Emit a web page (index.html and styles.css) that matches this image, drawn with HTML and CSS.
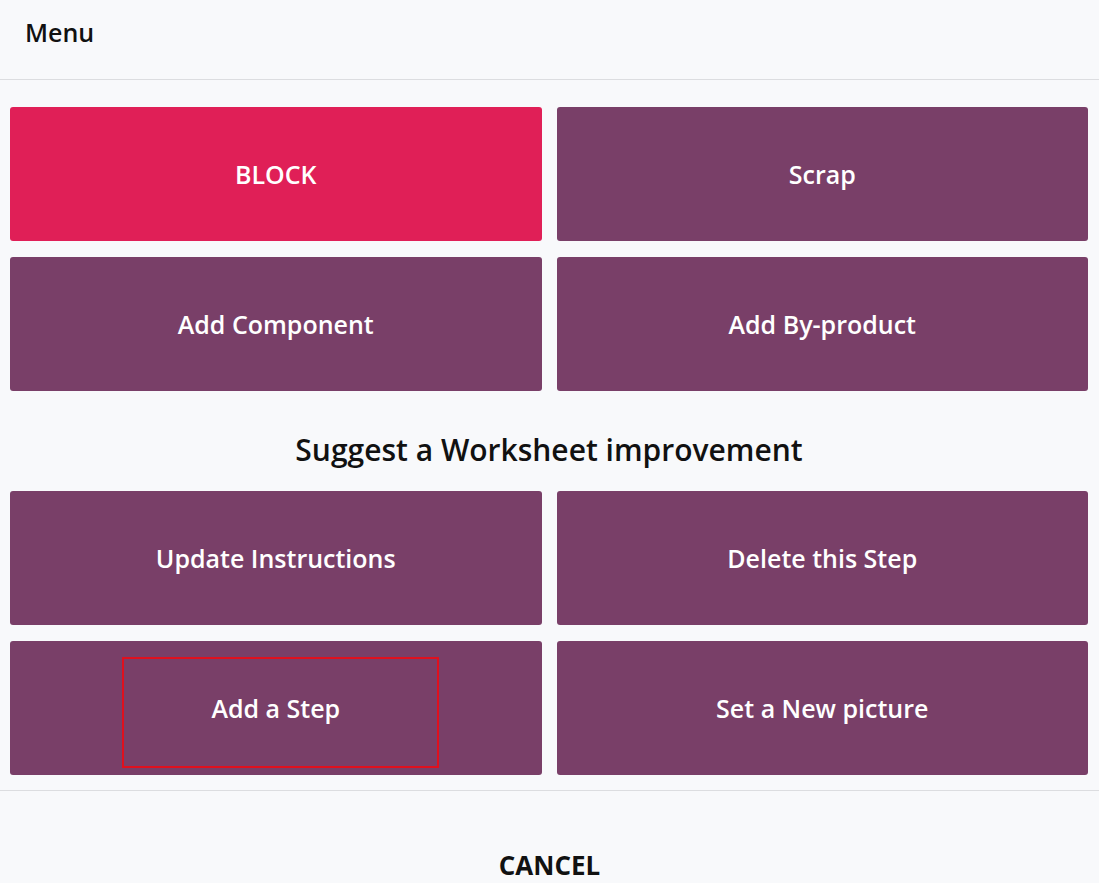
FILE: index.html
```html
<!DOCTYPE html>
<html lang="en">
<head>
    <meta charset="UTF-8">
    <title>Menu</title>
    <link rel="stylesheet" href="styles.css">
</head>
<body>
    <header class="menu-header">
        <h1>Menu</h1>
    </header>
    <main class="menu-body">
        <div class="button-grid">
            <button class="action action-danger">BLOCK</button>
            <button class="action">Scrap</button>
            <button class="action">Add Component</button>
            <button class="action">Add By-product</button>
        </div>
        <h2 class="section-title">Suggest a Worksheet improvement</h2>
        <div class="button-grid">
            <button class="action">Update Instructions</button>
            <button class="action">Delete this Step</button>
            <button class="action highlighted">Add a Step<span class="mark"></span></button>
            <button class="action">Set a New picture</button>
        </div>
    </main>
    <footer class="menu-footer">
        <button class="cancel">CANCEL</button>
    </footer>
</body>
</html>
```

FILE: styles.css
```css
body {
    font-family: 'Open Sans', 'Noto Sans', sans-serif;
    margin: 0;
    padding: 0;
    background-color: #f8f9fb;
    color: #111;
    overflow: hidden;
}

.menu-header {
    height: 80px;
    border-bottom: 1px solid #dcdde0;
    display: flex;
    align-items: center;
    padding: 0 25px;
    box-sizing: border-box;
}

.menu-header h1 {
    margin: 0 0 15px;
    font-size: 25px;
    font-weight: 600;
}

.menu-body {
    padding: 27px 11px 15px 10px;
    border-bottom: 1px solid #dcdde0;
}

.button-grid {
    display: grid;
    grid-template-columns: 1fr 1fr;
    column-gap: 15px;
    row-gap: 16px;
}

.action {
    position: relative;
    height: 134px;
    border: none;
    border-radius: 3px;
    background-color: #793f68;
    color: #fff;
    font-family: inherit;
    font-size: 25px;
    font-weight: 600;
    cursor: pointer;
}

.action-danger {
    background-color: #e01f57;
}

.section-title {
    margin: 0;
    height: 100px;
    padding-top: 18px;
    box-sizing: border-box;
    line-height: 82px;
    text-align: center;
    font-size: 30px;
    font-weight: 600;
}

.mark {
    position: absolute;
    left: 112px;
    top: 16px;
    width: 317px;
    height: 111px;
    border: 2px solid #e0101e;
    box-sizing: border-box;
}

.menu-footer {
    display: flex;
    justify-content: center;
    padding-top: 56px;
}

.cancel {
    background: none;
    border: none;
    font-family: inherit;
    font-size: 26px;
    font-weight: 700;
    color: #111;
    padding: 0;
}
```
